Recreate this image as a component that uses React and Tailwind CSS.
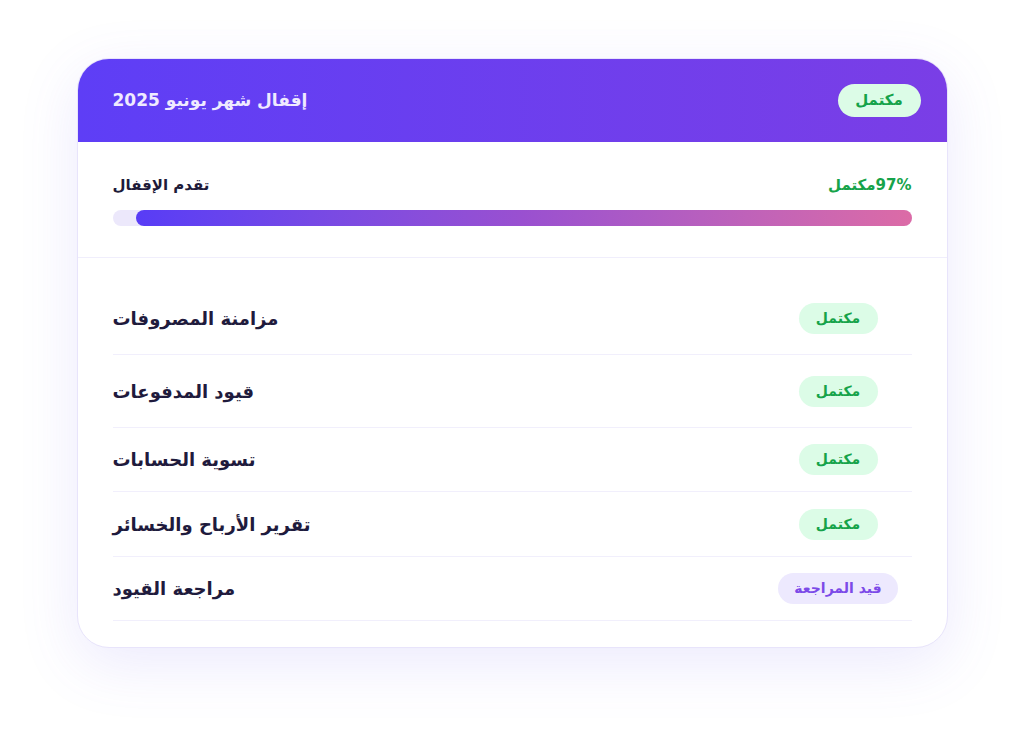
import React from "react";

const rows = [
  { label: "مزامنة المصروفات", status: "done", h: "h-[73px]" },
  { label: "قيود المدفوعات", status: "done", h: "h-[73px]" },
  { label: "تسوية الحسابات", status: "done", h: "h-[64px]" },
  { label: "تقرير الأرباح والخسائر", status: "done", h: "h-[65px]" },
  { label: "مراجعة القيود", status: "review", h: "h-[64px]" },
];

function Badge({ status }) {
  if (status === "review") {
    return (
      <span dir="rtl" className="inline-flex items-center justify-center h-[31px] px-4 rounded-full bg-[#ede9fe] text-[#7c4ae8] text-[14px] font-semibold">
        قيد المراجعة
      </span>
    );
  }
  return (
    <span dir="rtl" className="inline-flex items-center justify-center h-[31px] w-[79px] rounded-full bg-[#dcfce7] text-[#16a34a] text-[14px] font-semibold">
      مكتمل
    </span>
  );
}

export default function App() {
  return (
    <div className="min-h-[743px] w-full bg-white flex justify-center pt-[58px]" style={{ fontFamily: '"DejaVu Sans", sans-serif' }}>
      <div className="w-[871px] h-[590px] rounded-[32px] border border-[#e8e4fb] bg-white overflow-hidden shadow-[0_16px_60px_rgba(110,90,240,0.13)] flex flex-col">
        <div className="h-[83px] shrink-0 bg-gradient-to-r from-[#5e3ef6] to-[#7a3ee6] flex items-center justify-between pl-[35px] pr-[26px]">
          <h1 dir="rtl" className="text-[#efeaff] text-[17px] font-semibold">إقفال شهر يونيو 2025</h1>
          <span dir="rtl" className="inline-flex items-center justify-center h-[33px] w-[83px] rounded-full bg-[#dcfce7] text-[#16a34a] text-[15px] font-semibold">
            مكتمل
          </span>
        </div>
        <div className="px-[35px] pt-[32px] pb-[31px] border-b border-[#f0eefc]">
          <div className="flex items-center justify-between h-[22px]">
            <span dir="rtl" className="text-[#1e1b3a] text-[15px] font-bold">تقدم الإقفال</span>
            <span dir="rtl" className="text-[#16a34a] text-[15px] font-bold">97%مكتمل</span>
          </div>
          <div className="mt-[14px] h-[16px] w-full rounded-full bg-[#ece8fb] flex justify-end">
            <div className="h-full rounded-full bg-gradient-to-r from-[#583cf6] via-[#9a50d0] to-[#dc6ba6]" style={{ width: "97%" }} />
          </div>
        </div>
        <div className="px-[35px] pt-[24px]">
          {rows.map((r, i) => (
            <div key={i} className={`${r.h} flex items-center justify-between border-b border-[#f1effc]`}>
              <span dir="rtl" className="text-[#1f1b3d] text-[18px] font-bold">{r.label}</span>
              <div className="w-[147px] flex justify-center">
                <Badge status={r.status} />
              </div>
            </div>
          ))}
        </div>
      </div>
    </div>
  );
}
